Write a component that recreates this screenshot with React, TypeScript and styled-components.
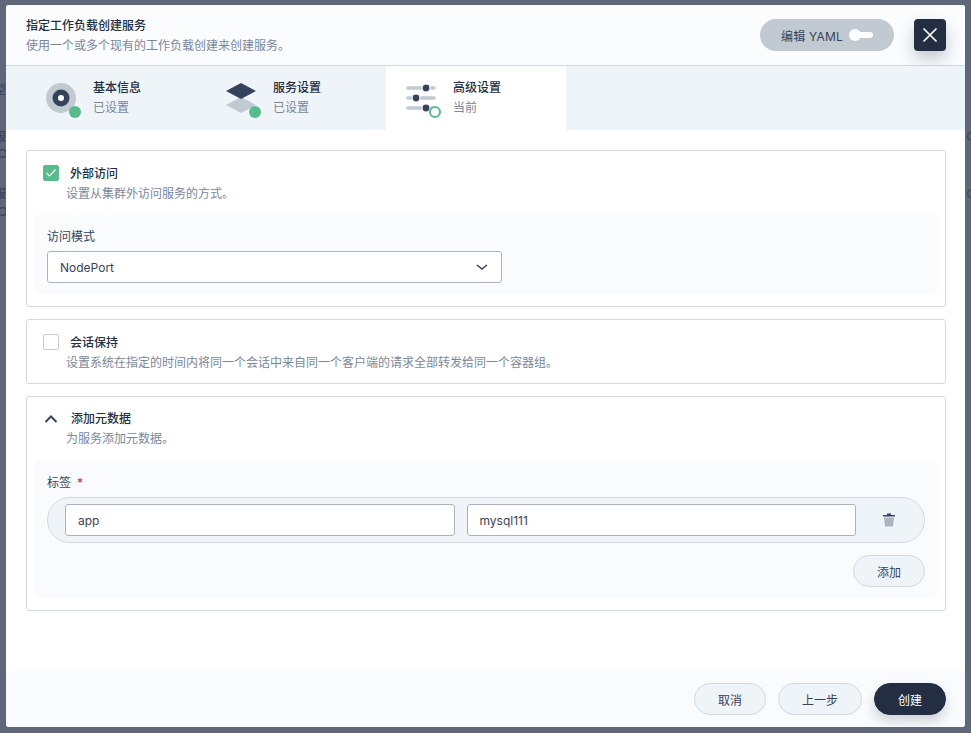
import React from 'react';
import styled, { createGlobalStyle } from 'styled-components';

const Global = createGlobalStyle`
  html, body { margin: 0; padding: 0; }
  body { font-family: Inter, "Noto Sans CJK SC", "Noto Sans", sans-serif; color: #242e42; }
  * { box-sizing: border-box; }
`;

const Overlay = styled.div`
  position: relative; width: 971px; height: 733px; overflow: hidden;
  background: #5f6779; padding: 5px 6px 6px;
`;
const BackdropGlyph = styled.span<{ $x: number; $y: number }>`
  position: absolute; left: ${p => p.$x}px; top: ${p => p.$y}px;
  font-size: 12px; line-height: 16px; font-weight: 500; color: #3d4658;
`;
const Modal = styled.div`
  position: relative; width: 959px; height: 722px; border-radius: 3px; overflow: hidden;
  background: #fff; display: flex; flex-direction: column;
`;
const Header = styled.header`
  height: 61px; flex: none; background: #fbfcfe; border-bottom: 1px solid #d1d9e1;
  display: flex; align-items: center; padding: 0 19px 0 20px;
`;
const HeaderText = styled.div`flex: 1; padding-top: 1px;`;
const Title = styled.div`font-size: 12px; font-weight: 500; line-height: 20px; color: #242e42;`;
const Sub = styled.div`font-size: 12px; line-height: 20px; color: #79879c;`;
const YamlButton = styled.div`
  width: 134px; height: 32px; border-radius: 16px; background: #c1c9d1; margin-right: 20px;
  display: flex; align-items: center; padding-left: 21px; font-size: 12px; letter-spacing: .2px; color: #36435c; gap: 6px;
`;
const Knob = styled.span`position: relative; display: block; width: 24px; height: 6px; border-radius: 3px; background: #fff;
  &::before { content: ''; position: absolute; left: 0; top: -3px; width: 12px; height: 12px; border-radius: 50%; background: #fff; }
`;
const CloseButton = styled.div`
  width: 32px; height: 32px; border-radius: 4px; background: #242e42; display: flex; align-items: center; justify-content: center;
  box-shadow: 0 8px 16px rgba(36,46,66,.25);
`;
const Steps = styled.nav`flex: none; height: 64px; background: #eff4f9; display: flex; padding-left: 20px;`;
const Step = styled.div<{ $active?: boolean }>`
  width: 180px; display: flex; align-items: center; padding-left: 20px; gap: 11px;
  background: ${p => (p.$active ? '#fff' : 'transparent')};
`;
const StepIcon = styled.svg`flex: none; display: block;`;
const StepTitle = styled.div`font-size: 12px; font-weight: 500; line-height: 20px; color: #242e42;`;
const StepSub = styled.div`font-size: 12px; line-height: 20px; color: #79879c;`;
const Body = styled.main`flex: 1; background: #fff; padding: 20px 19px 0 20px; display: flex; flex-direction: column; gap: 12px;`;
const Card = styled.section<{ $bottom: number }>`
  border: 1px solid #d1d9e1; border-radius: 3px; background: #fff; padding: 13px 8px ${p => p.$bottom}px;
`;
const CardHead = styled.div<{ $raised?: boolean }>`
  display: flex; padding: 0 0 ${p => (p.$raised ? '1px' : '0')} 8px; gap: 7px;
  margin-top: ${p => (p.$raised ? '-1px' : '0')};
`;
const CardText = styled.div``;
const CardTitle = styled.div<{ $indent: number }>`
  font-size: 12px; font-weight: 500; line-height: 20px; color: #242e42; padding-left: ${p => p.$indent}px;
`;
const CardSub = styled.div`font-size: 12px; line-height: 20px; color: #79879c;`;
const Check = styled.span<{ $on?: boolean }>`
  flex: none; width: 16px; height: 16px; margin-top: 1px; border-radius: 2px; display: flex; align-items: center; justify-content: center;
  background: ${p => (p.$on ? '#55bc8a' : '#fff')}; border: 1px solid ${p => (p.$on ? '#55bc8a' : '#c1c9d1')};
`;
const Chevron = styled.svg`flex: none; margin-top: 2px; display: block;`;
const Panel = styled.div<{ $h: number }>`
  margin-top: 11px; height: ${p => p.$h}px; background: #f9fbfd; border-radius: 3px; padding: 12px 12px 0;
`;
const Label = styled.div`font-size: 12px; line-height: 20px; color: #36435c; margin-bottom: 4px;`;
const Req = styled.span`color: #ca2621; margin-left: 6px;`;
const Select = styled.div`
  width: 455px; height: 32px; border: 1px solid #abb4be; border-radius: 3px; background: #fff;
  display: flex; align-items: center; justify-content: space-between; padding: 0 11px 0 12px; font-size: 12px; color: #36435c;
`;
const KVRow = styled.div`
  width: 878px; height: 46px; border: 1px solid #d1d9e1; border-radius: 23px; background: #eff4f9;
  display: flex; align-items: center; padding-left: 17px; gap: 12px;
`;
const Input = styled.div`
  width: 389.5px; height: 32px; border: 1px solid #abb4be; border-radius: 3px; background: #fff;
  display: flex; align-items: center; padding: 0 12px; font-size: 12px; color: #36435c;
`;
const Trash = styled.svg`margin-left: 13px; display: block;`;
const AddRow = styled.div`display: flex; justify-content: flex-end; width: 878px; margin-top: 12px;`;
const Pill = styled.div<{ $w: number; $primary?: boolean }>`
  width: ${p => p.$w}px; height: 32px; border-radius: 16px; display: flex; align-items: center; justify-content: center;
  font-size: 12px; font-weight: 400;
  color: ${p => (p.$primary ? '#fff' : '#36435c')};
  background: ${p => (p.$primary ? '#242e42' : '#eff4f9')};
  border: 1px solid ${p => (p.$primary ? '#242e42' : '#d1d9e1')};
  box-shadow: ${p => (p.$primary ? '0 6px 12px rgba(36,46,66,.2)' : 'none')};
`;
const Footer = styled.footer`
  flex: none; height: 56px; background: #f9fbfd; display: flex; align-items: center; justify-content: flex-end; gap: 12px; padding: 0 19px 0 0;
`;
const Green = '#55bc8a';
const Dark = '#36435c';
const Grey = '#c1c9d1';

export default function App() {
  return (
    <Overlay>
      <Global />
      <BackdropGlyph $x={-6} $y={82}>型</BackdropGlyph>
      <BackdropGlyph $x={-6} $y={129}>服</BackdropGlyph>
      <BackdropGlyph $x={-6} $y={186}>服</BackdropGlyph>
      <BackdropGlyph $x={-3} $y={146}>○</BackdropGlyph>
      <BackdropGlyph $x={-3} $y={204}>○</BackdropGlyph>
      <BackdropGlyph $x={966} $y={129}>○</BackdropGlyph>
      <BackdropGlyph $x={966} $y={186}>○</BackdropGlyph>
      <Modal>
        <Header>
          <HeaderText>
            <Title>指定工作负载创建服务</Title>
            <Sub>使用一个或多个现有的工作负载创建来创建服务。</Sub>
          </HeaderText>
          <YamlButton>编辑 YAML<Knob /></YamlButton>
          <CloseButton>
            <svg width="16" height="16" viewBox="0 0 16 16"><path d="M1.5 1.5L14.5 14.5M14.5 1.5L1.5 14.5" stroke="#fff" strokeWidth="1.7" fill="none" /></svg>
          </CloseButton>
        </Header>
        <Steps>
          <Step>
            <StepIcon width="36" height="40" viewBox="0 0 36 40">
              <circle cx="15" cy="20" r="15" fill={Grey} />
              <circle cx="15" cy="20" r="8.5" fill={Dark} />
              <circle cx="15" cy="20" r="3" fill="#fff" />
              <circle cx="29" cy="34" r="6" fill={Green} />
            </StepIcon>
            <div><StepTitle>基本信息</StepTitle><StepSub>已设置</StepSub></div>
          </Step>
          <Step>
            <StepIcon width="36" height="40" viewBox="0 0 36 40">
              <path d="M15 19L30 27L15 35L0 27Z" fill={Grey} />
              <path d="M15 5L30 13L15 21L0 13Z" fill={Dark} />
              <circle cx="29" cy="34" r="6" fill={Green} />
            </StepIcon>
            <div><StepTitle>服务设置</StepTitle><StepSub>已设置</StepSub></div>
          </Step>
          <Step $active>
            <StepIcon width="36" height="40" viewBox="0 0 36 40">
              <path d="M2 10H28M2 20H28M2 30H28" stroke={Grey} strokeWidth="3.6" strokeLinecap="round" fill="none" />
              <circle cx="20" cy="10" r="4" stroke="#fff" strokeWidth="1.2" fill={Dark} />
              <circle cx="10" cy="20" r="4" stroke="#fff" strokeWidth="1.2" fill={Dark} />
              <circle cx="20" cy="30" r="4" stroke="#fff" strokeWidth="1.2" fill={Dark} />
              <circle cx="29" cy="34" r="5" fill="#fff" stroke={Green} strokeWidth="2" />
            </StepIcon>
            <div><StepTitle>高级设置</StepTitle><StepSub>当前</StepSub></div>
          </Step>
        </Steps>
        <Body>
          <Card $bottom={12}>
            <CardHead>
              <Check $on>
                <svg width="12" height="10" viewBox="0 0 12 10"><path d="M1.5 5L4.5 8L10.5 1.5" stroke="#fff" strokeWidth="1.2" fill="none" /></svg>
              </Check>
              <CardText>
                <CardTitle $indent={4}>外部访问</CardTitle>
                <CardSub>设置从集群外访问服务的方式。</CardSub>
              </CardText>
            </CardHead>
            <Panel $h={79}>
              <Label>访问模式</Label>
              <Select>
                NodePort
                <svg width="16" height="16" viewBox="0 0 16 16"><path d="M3 6L8 10L13 6" stroke="#36435c" strokeWidth="1.5" fill="none" /></svg>
              </Select>
            </Panel>
          </Card>
          <Card $bottom={10}>
            <CardHead>
              <Check />
              <CardText>
                <CardTitle $indent={4}>会话保持</CardTitle>
                <CardSub>设置系统在指定的时间内将同一个会话中来自同一个客户端的请求全部转发给同一个容器组。</CardSub>
              </CardText>
            </CardHead>
          </Card>
          <Card $bottom={12}>
            <CardHead $raised>
              <Chevron width="16" height="16" viewBox="0 0 16 16"><path d="M2.5 11L8 5.5L13.5 11" stroke="#36435c" strokeWidth="2" fill="none" /></Chevron>
              <CardText>
                <CardTitle $indent={5}>添加元数据</CardTitle>
                <CardSub>为服务添加元数据。</CardSub>
              </CardText>
            </CardHead>
            <Panel $h={137}>
              <Label>标签<Req>*</Req></Label>
              <KVRow>
                <Input>app</Input>
                <Input>mysql111</Input>
                <Trash width="16" height="16" viewBox="0 0 16 16">
                  <path d="M6 1.5H10V3H14V4.5H2V3H6Z" fill="#36435c" />
                  <path d="M3 5.5H13L12 14.5H4Z" fill="#abb4be" />
                </Trash>
              </KVRow>
              <AddRow><Pill $w={72}>添加</Pill></AddRow>
            </Panel>
          </Card>
        </Body>
        <Footer>
          <Pill $w={72}>取消</Pill>
          <Pill $w={84}>上一步</Pill>
          <Pill $w={72} $primary>创建</Pill>
        </Footer>
      </Modal>
    </Overlay>
  );
}
